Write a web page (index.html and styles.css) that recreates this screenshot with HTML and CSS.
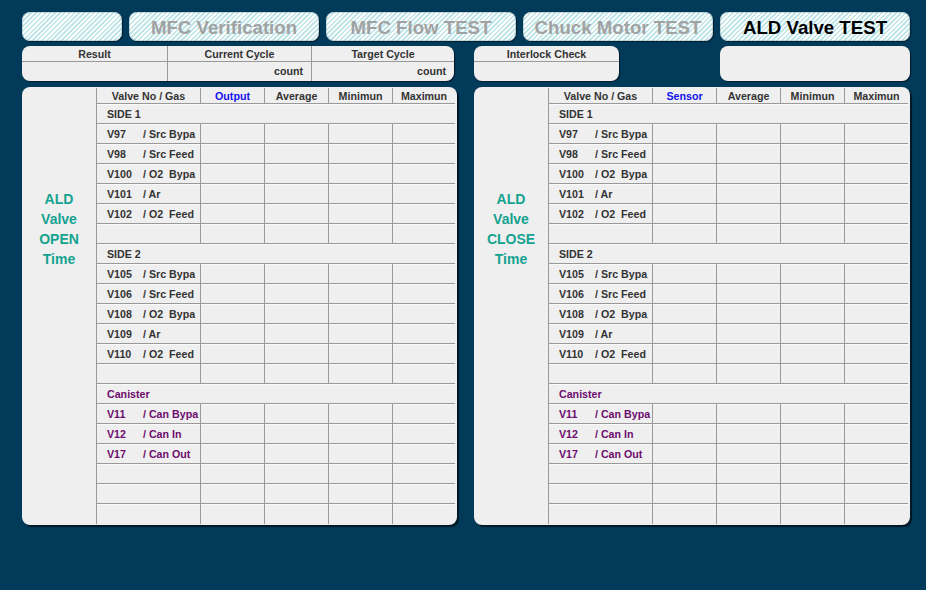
FILE: index.html
```html
<!DOCTYPE html>
<html>
<head>
<meta charset="utf-8">
<link rel="stylesheet" href="styles.css">
</head>
<body>
<div class="screen">
  <div class="tabs">
    <div class="tab tab-blank"></div>
    <div class="tab">MFC Verification</div>
    <div class="tab">MFC Flow TEST</div>
    <div class="tab">Chuck Motor TEST</div>
    <div class="tab active">ALD Valve TEST</div>
  </div>

  <div class="info-row">
    <div class="box box-result">
      <div class="brow bhead"><div class="bc">Result</div><div class="bc">Current Cycle</div><div class="bc">Target Cycle</div></div>
      <div class="brow bvals"><div class="bc"></div><div class="bc right">count</div><div class="bc right">count</div></div>
    </div>
    <div class="box box-interlock">
      <div class="bhead single">Interlock Check</div>
      <div class="bvals"></div>
    </div>
    <div class="box box-blank"></div>
  </div>

  <div class="panels">
    <section class="panel panel-left">
      <div class="panel-label">ALD<br>Valve<br>OPEN<br>Time</div>
      <div class="vtable">
        <div class="row head"><div class="c">Valve No / Gas</div><div class="c blue">Output</div><div class="c">Average</div><div class="c">Minimun</div><div class="c">Maximun</div></div>
        <div class="row sect"><div class="c">SIDE 1</div></div>
        <div class="row"><div class="c nm"><span class="vn">V97</span><span class="gas">/ Src Bypa</span></div><div class="c"></div><div class="c"></div><div class="c"></div><div class="c"></div></div>
        <div class="row"><div class="c nm"><span class="vn">V98</span><span class="gas">/ Src Feed</span></div><div class="c"></div><div class="c"></div><div class="c"></div><div class="c"></div></div>
        <div class="row"><div class="c nm"><span class="vn">V100</span><span class="gas">/ O2  Bypa</span></div><div class="c"></div><div class="c"></div><div class="c"></div><div class="c"></div></div>
        <div class="row"><div class="c nm"><span class="vn">V101</span><span class="gas">/ Ar</span></div><div class="c"></div><div class="c"></div><div class="c"></div><div class="c"></div></div>
        <div class="row"><div class="c nm"><span class="vn">V102</span><span class="gas">/ O2  Feed</span></div><div class="c"></div><div class="c"></div><div class="c"></div><div class="c"></div></div>
        <div class="row"><div class="c nm"></div><div class="c"></div><div class="c"></div><div class="c"></div><div class="c"></div></div>
        <div class="row sect"><div class="c">SIDE 2</div></div>
        <div class="row"><div class="c nm"><span class="vn">V105</span><span class="gas">/ Src Bypa</span></div><div class="c"></div><div class="c"></div><div class="c"></div><div class="c"></div></div>
        <div class="row"><div class="c nm"><span class="vn">V106</span><span class="gas">/ Src Feed</span></div><div class="c"></div><div class="c"></div><div class="c"></div><div class="c"></div></div>
        <div class="row"><div class="c nm"><span class="vn">V108</span><span class="gas">/ O2  Bypa</span></div><div class="c"></div><div class="c"></div><div class="c"></div><div class="c"></div></div>
        <div class="row"><div class="c nm"><span class="vn">V109</span><span class="gas">/ Ar</span></div><div class="c"></div><div class="c"></div><div class="c"></div><div class="c"></div></div>
        <div class="row"><div class="c nm"><span class="vn">V110</span><span class="gas">/ O2  Feed</span></div><div class="c"></div><div class="c"></div><div class="c"></div><div class="c"></div></div>
        <div class="row"><div class="c nm"></div><div class="c"></div><div class="c"></div><div class="c"></div><div class="c"></div></div>
        <div class="row sect can"><div class="c">Canister</div></div>
        <div class="row can"><div class="c nm"><span class="vn">V11</span><span class="gas">/ Can Bypa</span></div><div class="c"></div><div class="c"></div><div class="c"></div><div class="c"></div></div>
        <div class="row can"><div class="c nm"><span class="vn">V12</span><span class="gas">/ Can In</span></div><div class="c"></div><div class="c"></div><div class="c"></div><div class="c"></div></div>
        <div class="row can"><div class="c nm"><span class="vn">V17</span><span class="gas">/ Can Out</span></div><div class="c"></div><div class="c"></div><div class="c"></div><div class="c"></div></div>
        <div class="row"><div class="c nm"></div><div class="c"></div><div class="c"></div><div class="c"></div><div class="c"></div></div>
        <div class="row"><div class="c nm"></div><div class="c"></div><div class="c"></div><div class="c"></div><div class="c"></div></div>
        <div class="row last"><div class="c nm"></div><div class="c"></div><div class="c"></div><div class="c"></div><div class="c"></div></div>
      </div>
    </section>

    <section class="panel panel-right">
      <div class="panel-label">ALD<br>Valve<br>CLOSE<br>Time</div>
      <div class="vtable">
        <div class="row head"><div class="c">Valve No / Gas</div><div class="c blue">Sensor</div><div class="c">Average</div><div class="c">Minimun</div><div class="c">Maximun</div></div>
        <div class="row sect"><div class="c">SIDE 1</div></div>
        <div class="row"><div class="c nm"><span class="vn">V97</span><span class="gas">/ Src Bypa</span></div><div class="c"></div><div class="c"></div><div class="c"></div><div class="c"></div></div>
        <div class="row"><div class="c nm"><span class="vn">V98</span><span class="gas">/ Src Feed</span></div><div class="c"></div><div class="c"></div><div class="c"></div><div class="c"></div></div>
        <div class="row"><div class="c nm"><span class="vn">V100</span><span class="gas">/ O2  Bypa</span></div><div class="c"></div><div class="c"></div><div class="c"></div><div class="c"></div></div>
        <div class="row"><div class="c nm"><span class="vn">V101</span><span class="gas">/ Ar</span></div><div class="c"></div><div class="c"></div><div class="c"></div><div class="c"></div></div>
        <div class="row"><div class="c nm"><span class="vn">V102</span><span class="gas">/ O2  Feed</span></div><div class="c"></div><div class="c"></div><div class="c"></div><div class="c"></div></div>
        <div class="row"><div class="c nm"></div><div class="c"></div><div class="c"></div><div class="c"></div><div class="c"></div></div>
        <div class="row sect"><div class="c">SIDE 2</div></div>
        <div class="row"><div class="c nm"><span class="vn">V105</span><span class="gas">/ Src Bypa</span></div><div class="c"></div><div class="c"></div><div class="c"></div><div class="c"></div></div>
        <div class="row"><div class="c nm"><span class="vn">V106</span><span class="gas">/ Src Feed</span></div><div class="c"></div><div class="c"></div><div class="c"></div><div class="c"></div></div>
        <div class="row"><div class="c nm"><span class="vn">V108</span><span class="gas">/ O2  Bypa</span></div><div class="c"></div><div class="c"></div><div class="c"></div><div class="c"></div></div>
        <div class="row"><div class="c nm"><span class="vn">V109</span><span class="gas">/ Ar</span></div><div class="c"></div><div class="c"></div><div class="c"></div><div class="c"></div></div>
        <div class="row"><div class="c nm"><span class="vn">V110</span><span class="gas">/ O2  Feed</span></div><div class="c"></div><div class="c"></div><div class="c"></div><div class="c"></div></div>
        <div class="row"><div class="c nm"></div><div class="c"></div><div class="c"></div><div class="c"></div><div class="c"></div></div>
        <div class="row sect can"><div class="c">Canister</div></div>
        <div class="row can"><div class="c nm"><span class="vn">V11</span><span class="gas">/ Can Bypa</span></div><div class="c"></div><div class="c"></div><div class="c"></div><div class="c"></div></div>
        <div class="row can"><div class="c nm"><span class="vn">V12</span><span class="gas">/ Can In</span></div><div class="c"></div><div class="c"></div><div class="c"></div><div class="c"></div></div>
        <div class="row can"><div class="c nm"><span class="vn">V17</span><span class="gas">/ Can Out</span></div><div class="c"></div><div class="c"></div><div class="c"></div><div class="c"></div></div>
        <div class="row"><div class="c nm"></div><div class="c"></div><div class="c"></div><div class="c"></div><div class="c"></div></div>
        <div class="row"><div class="c nm"></div><div class="c"></div><div class="c"></div><div class="c"></div><div class="c"></div></div>
        <div class="row last"><div class="c nm"></div><div class="c"></div><div class="c"></div><div class="c"></div><div class="c"></div></div>
      </div>
    </section>
  </div>
</div>
</body>
</html>
```

FILE: styles.css
```css
html, body {
  margin: 0;
  padding: 0;
  background: #023a5a;
}
body {
  width: 926px;
  height: 590px;
  overflow: hidden;
  font-family: "Liberation Sans", Arial, sans-serif;
}
.screen {
  width: 888px;
  padding: 12px 0 0 22px;
}

/* Tabs */
.tabs {
  display: flex;
  gap: 7px;
  height: 29px;
}
.tab {
  width: 190px;
  height: 29px;
  box-sizing: border-box;
  border-radius: 8px;
  background: repeating-linear-gradient(-45deg, #ffffff 0px, #ffffff 1.6px, #c3e6e9 1.6px, #c3e6e9 3.4px);
  box-shadow: inset 0 0 0 1px rgba(120,150,160,0.35), 1px 1px 1px rgba(0,0,0,0.45);
  display: flex;
  align-items: center;
  justify-content: center;
  font-size: 14pt;
  font-weight: bold;
  color: #a2a2a2;
  padding-top: 3px;
}
.tab-blank { width: 100px; }
.tab.active { color: #000; }

/* Info row */
.info-row {
  display: flex;
  margin-top: 5px;
  height: 35px;
}
.box {
  height: 35px;
  box-sizing: border-box;
  background: #efefef;
  border-radius: 8px;
  box-shadow: 1px 1px 1px rgba(0,0,0,0.55);
  overflow: hidden;
  font-size: 8pt;
  font-weight: bold;
  color: #333;
}
.box-result { width: 432px; }
.box-interlock { width: 145px; margin-left: 20px; }
.box-blank { width: 190px; margin-left: auto; }
.brow {
  display: grid;
  grid-template-columns: 145px 144px 1fr;
}
.bhead {
  height: 16px;
  box-sizing: border-box;
  border-bottom: 1px solid #999;
  padding-top: 2px;
  line-height: 13px;
  text-align: center;
}
.bvals {
  height: 19px;
  line-height: 19px;
}
.bc { border-left: 1px solid #999; padding: 0 8px; }
.bc:first-child { border-left: none; }
.bhead .bc { margin-top: -2px; padding-top: 2px; }
.bc.right { text-align: right; }
.bhead.single { text-align: center; }

/* Panels */
.panels {
  display: flex;
  gap: 17px;
  margin-top: 6px;
}
.panel {
  height: 438px;
  box-sizing: border-box;
  background: #efefef;
  border-radius: 8px;
  box-shadow: 2px 2px 1px rgba(0,0,0,0.6);
  display: flex;
  padding: 1px 2px 0 0;
  overflow: hidden;
}
.panel-left { width: 435px; }
.panel-right { width: 436px; }
.panel-label {
  width: 74px;
  flex: none;
  padding-top: 101px;
  text-align: center;
  font-size: 14px;
  font-weight: bold;
  line-height: 20px;
  color: #15a28f;
}
.vtable {
  flex: 1;
  font-size: 8pt;
  font-weight: bold;
  color: #333;
}
.row {
  display: grid;
  grid-template-columns: 104px 64px 64px 64px 1fr;
  height: 20px;
}
.c {
  border-left: 1px solid #999;
  border-bottom: 1px solid #999;
  box-shadow: inset 0 1px 0 #fafafa;
  padding-top: 2px;
  line-height: 17px;
  white-space: pre;
  overflow: hidden;
}
.row.head { height: 16px; }
.row.head .c {
  text-align: center;
  padding-top: 2px;
  line-height: 13px;
  box-shadow: none;
}
.c.blue { color: #1212ee; }
.row.sect .c {
  grid-column: 1 / -1;
  padding-left: 10px;
}
.c.nm { padding-left: 10px; }
.vn {
  display: inline-block;
  width: 36px;
}
.row.can .c { color: #6d0c6d; }
.row.last .c { border-bottom: none; }
```
